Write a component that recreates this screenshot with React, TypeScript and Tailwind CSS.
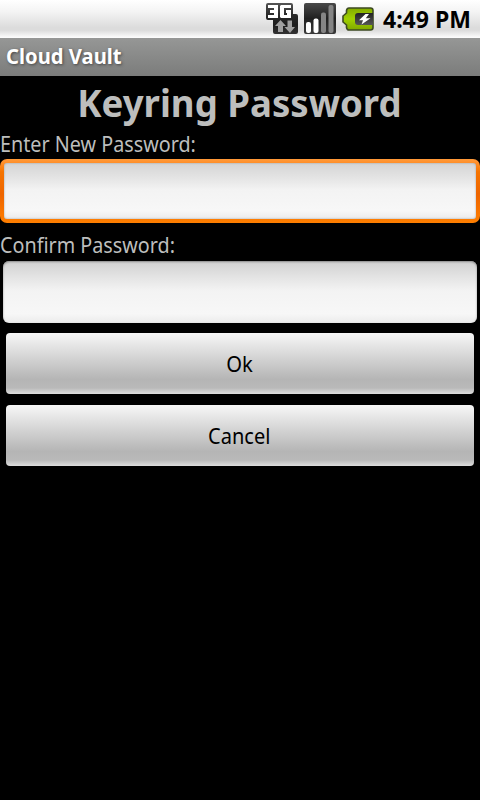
import React from "react";

const FONT = "font-['Noto_Sans','Open_Sans',sans-serif]";

function NetworkIcon() {
  return (
    <svg width="32" height="32" viewBox="0 0 32 32" className="shrink-0">
      <defs>
        <linearGradient id="net" x1="0" y1="0" x2="0" y2="1">
          <stop offset="0" stopColor="#555" />
          <stop offset="0.35" stopColor="#2c2c2c" />
          <stop offset="0.7" stopColor="#1c1c1c" />
          <stop offset="1" stopColor="#333" />
        </linearGradient>
      </defs>
      <path d="M2 0H25Q27 0 27 2V11H30Q32 11 32 13V29Q32 31 30 31H9Q7 31 7 29V17H2Q0 17 0 15V2Q0 0 2 0Z" fill="url(#net)" />
      <path d="M2 2H12V15H2V12H8V10H4V7H8V5H2Z" fill="#fff" />
      <path d="M15 2H25V5H18V12H21V10H20V7H25V15H15L14 14V3Z" fill="#fff" />
      <path d="M14.500 17L20 23H17V29H12V23H9Z" fill="#a0a0a0" />
      <path d="M21.500 17.500H26V24H29L24 30L18.500 24H21.500Z" fill="#a0a0a0" />
    </svg>
  );
}

function SignalIcon() {
  return (
    <svg width="32" height="32" viewBox="0 0 32 32" className="shrink-0">
      <defs>
        <linearGradient id="sig" x1="0" y1="0" x2="0" y2="1">
          <stop offset="0" stopColor="#4a4a4a" />
          <stop offset="0.5" stopColor="#202020" />
          <stop offset="1" stopColor="#3a3a3a" />
        </linearGradient>
      </defs>
      <rect width="32" height="31" rx="2" fill="url(#sig)" />
      <rect x="2" y="19" width="5" height="11" rx="2" fill="#fff" />
      <rect x="9.500" y="15.500" width="5" height="14.500" rx="2" fill="#fff" />
      <rect x="17" y="9.500" width="5" height="20.500" rx="2" fill="#858585" />
      <rect x="24.500" y="2" width="5" height="28" rx="2" fill="#858585" />
    </svg>
  );
}

function BatteryIcon() {
  return (
    <svg width="32" height="24" viewBox="0 0 32 24" className="shrink-0">
      <defs>
        <linearGradient id="bat" x1="0" y1="0" x2="0" y2="1">
          <stop offset="0" stopColor="#83ab00" />
          <stop offset="0.5" stopColor="#a0d000" />
          <stop offset="1" stopColor="#80a800" />
        </linearGradient>
        <linearGradient id="cell" x1="0" y1="0" x2="0" y2="1">
          <stop offset="0" stopColor="#222" />
          <stop offset="1" stopColor="#555" />
        </linearGradient>
      </defs>
      <path d="M7 1H28.500Q31 1 31 3.500V20.500Q31 23 28.500 23H7Q5 23 4.500 20.500V18L1 15V9L4.500 6V3.500Q5 1 7 1Z" fill="url(#bat)" stroke="#3d4a22" strokeWidth="1.600" />
      <path d="M16 6H31V18H16Q13 18 13 15V9Q13 6 16 6Z" fill="url(#cell)" />
      <path d="M23.500 7L17 13.200H21L19.500 17.500L28.500 11.200H23.800L27 7Z" fill="#fff" />
    </svg>
  );
}

export default function App() {
  return (
    <div className={`flex h-[800px] w-[480px] flex-col overflow-hidden bg-black text-[#bdbebd] ${FONT}`}>
      <div className="flex h-[38px] items-center bg-[linear-gradient(#fff_0%,#f4f4f4_30%,#dcdcdc_72%,#dcdcdc_80%,#fbfbfb_98%)] pl-[266px] text-black">
        <NetworkIcon />
        <span className="w-1.5" />
        <SignalIcon />
        <span className="w-1.5" />
        <BatteryIcon />
        <span className="ml-[9px] text-[23px] leading-none font-bold whitespace-nowrap">4:49 PM</span>
      </div>
      <header className="flex h-[38px] items-center bg-linear-to-b from-[#969796] to-[#7b7c7b] pb-0.5 pl-1.5">
        <span className="origin-left scale-x-[0.963] text-[21px] leading-none font-bold whitespace-nowrap text-white [text-shadow:1px_1px_3px_#444]">Cloud Vault</span>
      </header>
      <main className="flex flex-col">
        <h1 className="flex h-[57px] items-center justify-center pr-[2px] pb-[5px] text-[38px] leading-none font-bold whitespace-nowrap">
          <span className="scale-x-[0.963]">Keyring Password</span>
        </h1>
        <label className="flex h-[26px] items-center pb-[7px] text-[22px] leading-none">
          <span className="origin-left scale-x-[0.898]">Enter New Password:</span>
        </label>
        <div className="h-16 rounded-[7px] bg-[linear-gradient(#ff9a3a,#ff8f2a_6%,#f67400_20%,#ee6500_55%,#ff7f00)] p-1">
          <div className="h-full rounded-[3px] bg-[linear-gradient(#d4d4d4,#e3e3e3_25%,#f3f3f3_48%,#f7f7f7_85%,#ebebeb)] shadow-[inset_0_0_2px_#999]" />
        </div>
        <label className="mt-2 flex h-[30px] items-center pb-[5px] text-[22px] leading-none">
          <span className="origin-left scale-x-[0.898]">Confirm Password:</span>
        </label>
        <div className="mx-[3px] h-[62px] rounded-[6px] bg-[linear-gradient(#d0d0d0,#e3e3e3_25%,#f3f3f3_48%,#f7f7f7_85%,#ebebeb)] shadow-[inset_0_1px_2px_#888]" />
        <button className="mx-1.5 mt-2.5 flex h-[61px] items-center justify-center rounded bg-[linear-gradient(#f7f7f7,#b5b5b5_76%,#b9b9b9_90%,#dedede)] pr-0.5 pb-0.5 text-[22px] leading-none text-black">
          <span className="scale-x-[0.92]">Ok</span>
        </button>
        <button className="mx-1.5 mt-[11px] flex h-[61px] items-center justify-center rounded bg-[linear-gradient(#f7f7f7,#b5b5b5_76%,#b9b9b9_90%,#dedede)] pr-0.5 pb-0.5 text-[22px] leading-none text-black">
          <span className="scale-x-[0.91]">Cancel</span>
        </button>
      </main>
    </div>
  );
}
